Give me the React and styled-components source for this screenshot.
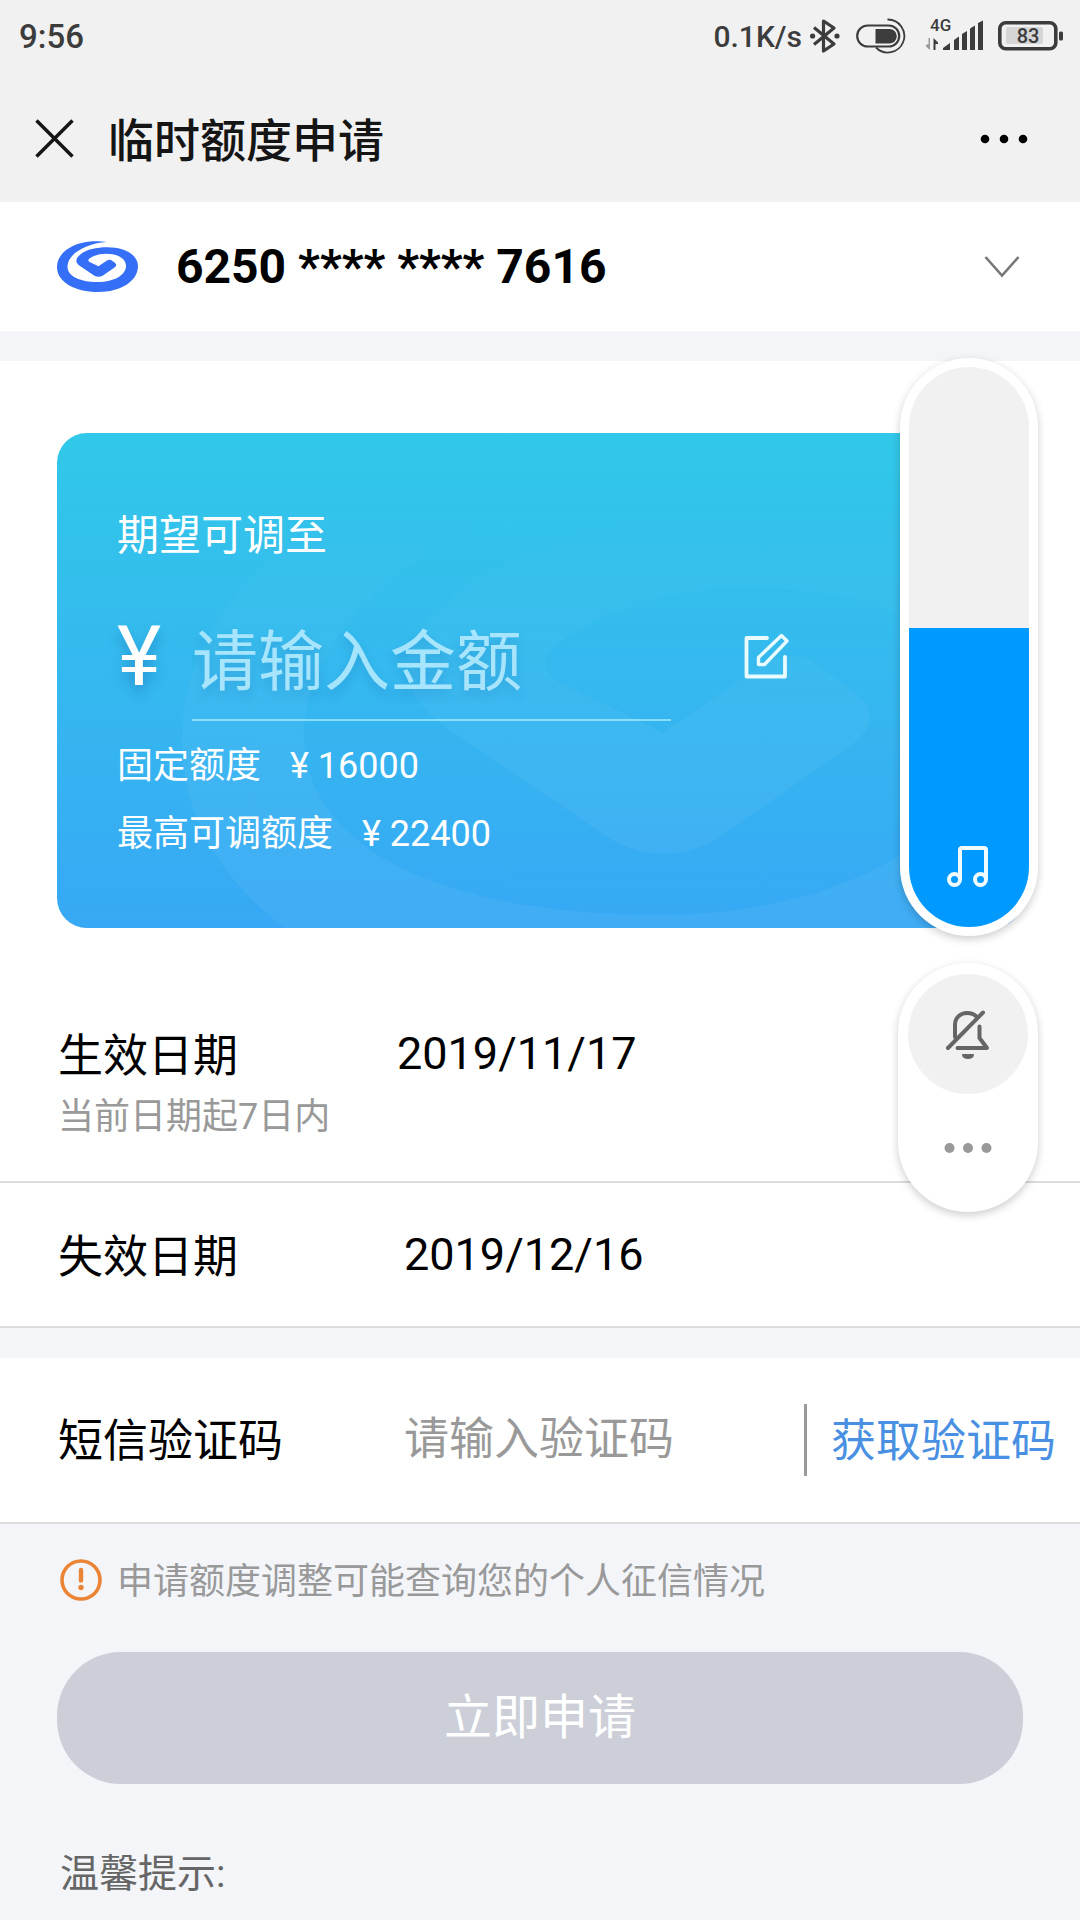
import React, { useState } from "react";
import styled, { createGlobalStyle } from "styled-components";

const GlobalStyle = createGlobalStyle`
  * {
    box-sizing: border-box;
  }

  body {
    margin: 0;
    background: #f3f5f9;
    color: #000;
    font-family: Roboto, "Noto Sans CJK SC", sans-serif;
  }

  button,
  input,
  select {
    margin: 0;
    padding: 0;
    border: 0;
    border-radius: 0;
    background: none;
    color: inherit;
    font-family: inherit;
    outline: none;
  }

  svg {
    display: block;
    flex: none;
  }
`;

const Page = styled.main`
  position: relative;
  min-height: 100vh;
  padding-bottom: 16px;
`;

/* ---------- top of the screen ---------- */

const Header = styled.header`
  background: #f1f1f1;
`;

const StatusBar = styled.div`
  display: flex;
  align-items: center;
  height: 72px;
  padding: 0 16px 0 19px;
  color: #3c3c3c;
  font-weight: 500;
`;

const Clock = styled.span`
  flex: 1;
  font-size: 33px;
`;

const Speed = styled.span`
  margin-right: 8px;
  font-size: 30px;
`;

const StatusIcon = styled.svg`
  margin-right: ${({ $gap }) => $gap || 0}px;
`;

const TitleBar = styled.div`
  display: flex;
  align-items: center;
  height: 130px;
  padding: 3px 52px 0 34px;
`;

const IconButton = styled.button`
  display: flex;
  flex: none;
  cursor: pointer;
`;

const Title = styled.h1`
  flex: 1;
  margin: 0 0 0 32px;
  padding-top: 4px;
  color: #151515;
  font-size: 46px;
  font-weight: 500;
  line-height: 60px;
`;

const AccountRow = styled.label`
  display: flex;
  align-items: center;
  height: 129px;
  padding: 0 60px 0 57px;
  background: #fff;
`;

const AccountSelect = styled.select`
  flex: 1;
  margin-left: 38px;
  appearance: none;
  font-size: 48px;
  font-weight: 700;
  line-height: 60px;
`;

/* ---------- limit card ---------- */

const Section = styled.section`
  margin-top: 30px;
  background: #fff;
`;

const CardWrap = styled.div`
  padding: 72px 57px 44px;
`;

const LimitCard = styled.div`
  position: relative;
  overflow: hidden;
  padding: 73px 61px 60px 60px;
  border-radius: 30px;
  background: linear-gradient(#31c8e9, #35b8ef 50%, #37a8f5);
  color: #fff;
`;

const Watermark = styled.svg`
  position: absolute;
  top: 6px;
  left: 125px;
  pointer-events: none;
`;

const CardLabel = styled.label`
  display: block;
  font-size: 42px;
  line-height: 60px;
`;

const AmountRow = styled.div`
  display: flex;
  align-items: center;
  margin-top: 59px;
  padding-right: 172px;
`;

const Currency = styled.span`
  flex: 0 0 75px;
  padding-bottom: 32px;
  font-size: 84px;
  line-height: 62px;
  text-shadow: 0 8px 12px rgba(20, 100, 170, 0.4);
`;

const AmountInput = styled.input`
  flex: 1;
  min-width: 0;
  height: 96px;
  margin-right: 73px;
  padding-bottom: 20px;
  border-bottom: 2px solid #87defa;
  font-size: 66px;
  text-shadow: 0 6px 10px rgba(20, 100, 170, 0.25);

  &::placeholder {
    color: #a5e4fd;
    opacity: 1;
  }
`;

const EditButton = styled(IconButton)`
  padding-bottom: 34px;
`;

const Limits = styled.dl`
  margin: 11px 0 0;
`;

const Limit = styled.div`
  display: flex;
  gap: 29px;
  font-size: 36px;
  line-height: 68px;

  dt,
  dd {
    margin: 0;
  }
`;

/* ---------- form rows ---------- */

const Row = styled.div`
  display: flex;
  align-items: flex-start;
  padding: ${({ $padding }) => $padding};
  border-bottom: 2px solid #dcdcdc;
  font-size: 45px;
  line-height: 60px;
`;

const RowName = styled.div`
  flex: 0 0 ${({ $width }) => $width || 346}px;
  padding-top: 3px;
`;

const Hint = styled.div`
  color: #999;
  font-size: 36px;
`;

const SmsRow = styled(Row)`
  align-items: center;
`;

const SmsInput = styled.input`
  flex: 1;
  min-width: 0;
  height: 72px;
  padding-bottom: 2px;
  font-size: 45px;

  &::placeholder {
    color: #999;
    opacity: 1;
  }
`;

const CodeButton = styled.button`
  height: 72px;
  padding: 4px 0 0 24px;
  border-left: 3px solid #999;
  color: #4a90e2;
  font-size: 45px;
  line-height: 60px;
  cursor: pointer;
`;

const Footer = styled.div`
  padding: 24px 57px 0;
`;

const Notice = styled.p`
  display: flex;
  align-items: center;
  gap: 15px;
  margin: 0 3px;
  color: #999;
  font-size: 36px;
  line-height: 60px;

  span {
    padding-top: 4px;
  }
`;

const Submit = styled.button`
  display: block;
  width: 100%;
  height: 132px;
  margin: 40px 0 60px;
  border-radius: 64px;
  background: #cccfd8;
  color: #fff;
  font-size: 48px;
  line-height: 60px;
`;

const Tips = styled.h2`
  margin: 0 3px;
  color: #666;
  font-size: 39px;
  font-weight: 400;
  line-height: 60px;
`;

/* ---------- volume overlay ---------- */

const VolumePanel = styled.aside`
  position: absolute;
  top: 358px;
  right: 42px;
  display: flex;
  flex-direction: column;
  align-items: flex-end;
  gap: 27px;
`;

const Pill = styled.div`
  position: relative;
  display: flex;
  flex-direction: column;
  align-items: center;
  padding: ${({ $padding }) => $padding};
  border-radius: 70px;
  background: #fff;
  box-shadow: 0 3px 8px rgba(0, 0, 0, 0.2);
`;

const VolumeInput = styled.input`
  display: block;
  width: 120px;
  height: 560px;
  border-radius: 60px;
  appearance: none;
  writing-mode: vertical-lr;
  direction: rtl;

  &::-webkit-slider-thumb {
    appearance: none;
    width: 120px;
    height: 1px;
    background: transparent;
  }
`;

const VolumeIcon = styled.svg`
  position: absolute;
  bottom: 48px;
  left: 46px;
  pointer-events: none;
`;

const MuteButton = styled(IconButton)`
  align-items: center;
  justify-content: center;
  width: 120px;
  height: 120px;
  border-radius: 50%;
  background: #f1f1f1;
`;

const MoreButton = styled(IconButton)`
  align-items: center;
  justify-content: center;
  width: 120px;
  height: 107px;
`;

const SPIRAL =
  "M50 1C45 0 40 0 36 .3C15 1.5 0 12 0 26C0 41 18 51 41 51C64 51 81 40 81 25C81 14 68 6.3 50 6.3C39 6.3 30 8.500 24 13C18 17.500 18 21.500 23 25L37 34.500Q41.500 37 46 34.500L57.500 26.500Q61 24 57.500 21.500L54.500 19.300Q52.500 18 50 19.500L41.500 25.300L32.500 21Q30 19.300 32.500 17.500C37 14.300 43 12.800 49 12.800C61 12.800 69 17.500 69 25C69 34 57 41 41 41C22 41 10.500 35 10.500 25.500C10.500 14 27 2.500 50 1Z";

const Dots = ({ width, r, gap, color }) => (
  <svg width={width} height="20" viewBox={`0 0 ${width} 20`} fill={color}>
    {[-1, 0, 1].map((n) => (
      <circle key={n} cx={width / 2 + n * gap} cy="10" r={r} />
    ))}
  </svg>
);

const StatusIcons = () => (
  <>
    <StatusIcon $gap={16} width="30" height="36" viewBox="0 0 30 36" fill="none" stroke="#3c3c3c" strokeWidth="3.200">
      <path d="M4 9.500L24 26L13.500 33V3L24 10L4 26.500" strokeLinejoin="round" />
      <circle cx="2.600" cy="18" r="2.600" fill="#3c3c3c" stroke="none" />
      <circle cx="27" cy="18" r="2.600" fill="#3c3c3c" stroke="none" />
    </StatusIcon>
    <StatusIcon $gap={20} width="50" height="36" viewBox="0 0 50 36" fill="none" stroke="#3c3c3c" strokeWidth="2.200">
      <rect x="1.200" y="7.500" width="42" height="21" rx="10.500" />
      <path d="M19.500 11H33.500A7.200 7.200 0 0 1 33.500 25.500H19.500Z" fill="#3c3c3c" stroke="none" />
      <path d="M31.500 1.500A16.500 16.500 0 1 1 20 29.500" strokeWidth="1.800" />
    </StatusIcon>
    <StatusIcon $gap={14} width="58" height="48" viewBox="0 -6 58 48" fill="#3c3c3c">
      <text x="4" y="13" fontFamily="Roboto" fontSize="17" fontWeight="500">4G</text>
      <path d="M4 20V32L0 28.500V26.500H2.500V20Z" fill="#999" />
      <path d="M7.500 32V20L12 24.500V26H9.500V32Z" />
      <path d="M17 32V30L24 25V32ZM28 32V22L33 18.500V32ZM36 32V16L41 13V32ZM44 32V10.500L49 7.500V32ZM52 32V5L57 2.500V32Z" />
    </StatusIcon>
    <StatusIcon width="66" height="30" viewBox="0 0 66 30" fill="#3c3c3c">
      <rect x="8" y="6" width="37" height="17" rx="2" fill="#d6d6d6" />
      <rect x="1.800" y="1.800" width="56" height="26" rx="6" fill="none" stroke="#3c3c3c" strokeWidth="3.600" />
      <rect x="61" y="10.500" width="4" height="9" rx="1.500" />
      <text x="30" y="22" textAnchor="middle" fontFamily="Roboto" fontSize="20" fontWeight="500">83</text>
    </StatusIcon>
  </>
);

const App = () => {
  const [amount, setAmount] = useState("");
  const [code, setCode] = useState("");
  const [volume, setVolume] = useState(53.4);

  const limits = [
    { name: "固定额度", value: "¥ 16000" },
    { name: "最高可调额度", value: "¥ 22400" },
  ];

  return (
    <Page>
      <GlobalStyle />
      <Header>
        <StatusBar>
          <Clock>9:56</Clock>
          <Speed>0.1K/s</Speed>
          <StatusIcons />
        </StatusBar>
        <TitleBar>
          <IconButton aria-label="关闭">
            <svg width="42" height="42" viewBox="0 0 42 42" stroke="#151515" strokeWidth="3.500">
              <path d="M2.500 2.500L38.500 38.500M38.500 2.500L2.500 38.500" />
            </svg>
          </IconButton>
          <Title>临时额度申请</Title>
          <IconButton aria-label="更多">
            <Dots width={48} r={4.3} gap={19} color="#000" />
          </IconButton>
        </TitleBar>
      </Header>

      <AccountRow>
        <svg width="81" height="51" viewBox="0 0 81 51" fill="#366ff7">
          <path d={SPIRAL} />
        </svg>
        <AccountSelect aria-label="信用卡">
          <option>6250 **** **** 7616</option>
        </AccountSelect>
        <svg width="36" height="24" viewBox="0 0 36 24" fill="none" stroke="#777" strokeWidth="2.600">
          <path d="M1.500 2L18 20.500L34.500 2" />
        </svg>
      </AccountRow>

      <form onSubmit={(e) => e.preventDefault()}>
        <Section>
          <CardWrap>
            <LimitCard>
              <Watermark width="940" height="592" viewBox="0 0 81 51">
                <defs>
                  <linearGradient id="fade" x1="0" y1="0" x2="0" y2="1">
                    <stop offset="0.1" stopColor="#fff" stopOpacity="0" />
                    <stop offset="0.55" stopColor="#fff" stopOpacity="0.045" />
                  </linearGradient>
                </defs>
                <path d={SPIRAL} fill="url(#fade)" />
              </Watermark>
              <CardLabel htmlFor="amount">期望可调至</CardLabel>
              <AmountRow>
                <Currency>¥</Currency>
                <AmountInput
                  id="amount"
                  inputMode="decimal"
                  placeholder="请输入金额"
                  value={amount}
                  onChange={(e) => setAmount(e.target.value)}
                />
                <EditButton type="button" aria-label="编辑">
                  <svg width="46" height="46" viewBox="0 0 46 46" fill="none" stroke="#e8fbff" strokeWidth="3.800" strokeLinejoin="round" strokeLinecap="round">
                    <path d="M23 5H2.500V43.500H41V24" />
                    <path d="M14.500 31.500V24.500L37.500 2.500L43 8L20.500 31.500Z" strokeWidth="3.400" />
                  </svg>
                </EditButton>
              </AmountRow>
              <Limits>
                {limits.map((item) => (
                  <Limit key={item.name}>
                    <dt>{item.name}</dt>
                    <dd>{item.value}</dd>
                  </Limit>
                ))}
              </Limits>
            </LimitCard>
          </CardWrap>
          <Row $padding="52px 57px 34px 58px">
            <RowName $width={339}>
              生效日期
              <Hint>当前日期起7日内</Hint>
            </RowName>
            <time dateTime="2019-11-17">2019/11/17</time>
          </Row>
          <Row $padding="42px 57px 38px 58px">
            <RowName>失效日期</RowName>
            <time dateTime="2019-12-16">2019/12/16</time>
          </Row>
        </Section>

        <Section>
          <SmsRow $padding="46px 24px 46px 58px">
            <RowName as="label" htmlFor="code">短信验证码</RowName>
            <SmsInput
              id="code"
              placeholder="请输入验证码"
              value={code}
              onChange={(e) => setCode(e.target.value)}
            />
            <CodeButton type="button">获取验证码</CodeButton>
          </SmsRow>
        </Section>

        <Footer>
          <Notice>
            <svg width="42" height="42" viewBox="0 0 42 42" fill="none" stroke="#ec8435" strokeLinecap="round">
              <circle cx="21" cy="21" r="19" strokeWidth="3.600" />
              <path d="M21 11V21.500" strokeWidth="4.400" />
              <circle cx="21" cy="28.500" r="2.700" fill="#ec8435" stroke="none" />
            </svg>
            <span>申请额度调整可能查询您的个人征信情况</span>
          </Notice>
          <Submit type="submit" disabled>立即申请</Submit>
          <Tips>温馨提示:</Tips>
        </Footer>
      </form>

      <VolumePanel>
        <Pill $padding="9px">
          <VolumeInput
            type="range"
            aria-label="媒体音量"
            min="0"
            max="100"
            step="0.1"
            value={volume}
            onChange={(e) => setVolume(Number(e.target.value))}
            style={{
              background: `linear-gradient(to top, #0099ff ${volume}%, #f1f1f1 ${volume}%)`,
            }}
          />
          <VolumeIcon width="44" height="44" viewBox="0 0 44 44" fill="none" stroke="#effbff" strokeWidth="4">
            <circle cx="8.500" cy="35.500" r="5.500" />
            <circle cx="34.500" cy="35.500" r="5.500" />
            <path d="M14 35.500V6Q14 4 16 4H38Q40 4 40 6V35.500" />
          </VolumeIcon>
        </Pill>
        <Pill $padding="11px 10px">
          <MuteButton type="button" aria-label="静音">
            <svg width="46" height="50" viewBox="0 0 46 50" fill="none" stroke="#666" strokeWidth="4" strokeLinecap="round" strokeLinejoin="round">
              <path d="M10 28V16C10 8 16 4 22 4C26 4 30 5.500 32.500 8.500" />
              <path d="M34.500 17.500V29L42 39H12.500" />
              <path d="M3 39L38 3.500" />
              <path d="M18 46H28C27 50 19 50 18 46Z" fill="#666" strokeWidth="2" />
            </svg>
          </MuteButton>
          <MoreButton type="button" aria-label="更多音量设置">
            <Dots width={50} r={5} gap={18.5} color="#999" />
          </MoreButton>
        </Pill>
      </VolumePanel>
    </Page>
  );
};

export default App;
